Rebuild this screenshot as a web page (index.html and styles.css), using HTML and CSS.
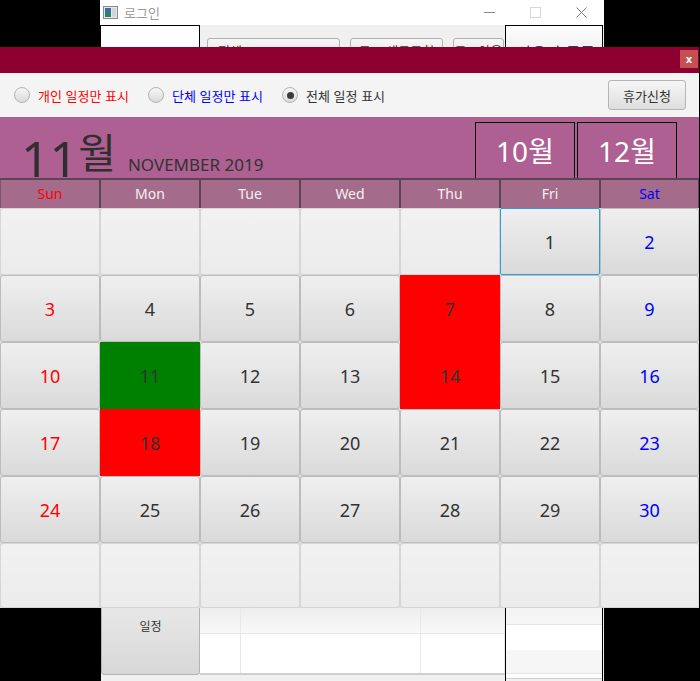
FILE: index.html
```html
<!DOCTYPE html>
<html lang="ko">
<head>
<meta charset="utf-8">
<title>일정</title>
<link rel="stylesheet" href="styles.css">
</head>
<body>
<div class="back">
  <div class="back-title">
    <svg class="app-icon" width="15" height="13" viewBox="0 0 15 13">
      <rect x="0.5" y="0.5" width="14" height="12" fill="#e8e8e8" stroke="#8a8a8a"/>
      <rect x="2" y="2" width="6" height="9" fill="#2f7f6a"/>
      <rect x="2" y="2" width="6" height="4" fill="#3b6fa8"/>
      <rect x="9" y="2" width="4" height="9" fill="#cfd6dc"/>
    </svg>
    <span class="back-title-text">로그인</span>
    <div class="win-controls">
      <span class="wc"><span class="wc-min"></span></span>
      <span class="wc"><span class="wc-max"></span></span>
      <span class="wc">
        <svg width="11" height="11" viewBox="0 0 11 11"><path d="M0.5 0.5L10.5 10.5M10.5 0.5L0.5 10.5" stroke="#7a7a7a" stroke-width="1"/></svg>
      </span>
    </div>
  </div>
  <div class="back-body">
    <div class="b-left">
      <div class="b-panel"></div>
      <div class="b-btn-schedule">일정</div>
      <div class="b-strip"></div>
    </div>
    <div class="b-mid">
      <div class="b-bar">
        <span class="b-combo">전체</span>
        <span class="b-button b-wide">로그 새로고침</span>
        <span class="b-button b-small">로그아웃</span>
      </div>
      <div class="b-table">
        <div class="b-trow b-shade"><span></span><span></span><span></span></div>
        <div class="b-trow b-white"><span></span><span></span><span></span></div>
      </div>
      <div class="b-strip"></div>
    </div>
    <div class="b-right">
      <div class="b-list-title">사용자 목록</div>
      <div class="b-list">
        <div class="b-li b-li-head"></div>
        <div class="b-li b-li-white"></div>
        <div class="b-li b-li-grey"></div>
        <div class="b-li b-li-end"></div>
      </div>
    </div>
  </div>
</div>

<div class="front">
  <div class="f-title"><span class="f-close">x</span></div>
  <div class="toolbar">
    <label class="radio-item"><span class="radio"></span><span class="rlabel red">개인 일정만 표시</span></label>
    <label class="radio-item"><span class="radio"></span><span class="rlabel blue">단체 일정만 표시</span></label>
    <label class="radio-item"><span class="radio checked"></span><span class="rlabel dark">전체 일정 표시</span></label>
    <span class="vac-btn">휴가신청</span>
  </div>
  <div class="month-head">
    <div class="month-title"><span class="m-num">11</span><span class="m-kor">월</span><span class="m-eng">NOVEMBER 2019</span></div>
    <div class="nav">
      <span class="nav-btn">10월</span>
      <span class="nav-btn">12월</span>
    </div>
  </div>
  <div class="week-head">
    <span class="wd sun">Sun</span><span class="wd">Mon</span><span class="wd">Tue</span><span class="wd">Wed</span><span class="wd">Thu</span><span class="wd">Fri</span><span class="wd sat">Sat</span>
  </div>
  <div class="days">
    <span class="day empty"></span><span class="day empty"></span><span class="day empty"></span><span class="day empty"></span><span class="day empty"></span><span class="day focus">1</span><span class="day sat">2</span>
    <span class="day sun">3</span><span class="day">4</span><span class="day">5</span><span class="day">6</span><span class="day ev-red">7</span><span class="day">8</span><span class="day sat">9</span>
    <span class="day sun">10</span><span class="day ev-green">11</span><span class="day">12</span><span class="day">13</span><span class="day ev-red">14</span><span class="day">15</span><span class="day sat">16</span>
    <span class="day sun">17</span><span class="day ev-red">18</span><span class="day">19</span><span class="day">20</span><span class="day">21</span><span class="day">22</span><span class="day sat">23</span>
    <span class="day sun">24</span><span class="day">25</span><span class="day">26</span><span class="day">27</span><span class="day">28</span><span class="day">29</span><span class="day sat">30</span>
    <span class="day empty"></span><span class="day empty"></span><span class="day empty"></span><span class="day empty"></span><span class="day empty"></span><span class="day empty"></span><span class="day empty"></span>
  </div>
</div>
</body>
</html>
```

FILE: styles.css
```css
* { box-sizing: border-box; }
html, body { margin: 0; padding: 0; }
body {
  width: 700px;
  height: 681px;
  background: #000;
  position: relative;
  overflow: hidden;
  font-family: "Noto Sans", "Noto Sans CJK KR", sans-serif;
  color: #333;
}

/* ---------- back window ---------- */
.back {
  position: absolute;
  left: 100px;
  top: 0;
  width: 504px;
  height: 681px;
  background: #f0f0f0;
  display: flex;
  flex-direction: column;
}
.back-title {
  height: 25px;
  background: #fff;
  display: flex;
  align-items: center;
  padding-left: 3px;
}
.app-icon { display: block; }
.back-title-text {
  margin-left: 6px;
  font-family: "Noto Sans CJK KR", sans-serif;
  font-size: 13px;
  color: #9a9a9a;
}
.win-controls { margin-left: auto; display: flex; height: 25px; }
.wc {
  width: 46px;
  height: 25px;
  display: flex;
  align-items: center;
  justify-content: center;
}
.wc-min { width: 11px; height: 1px; background: #8a8a8a; }
.wc-max { width: 11px; height: 11px; border: 1px solid #d6d6d6; }

.back-body { flex: 1; display: flex; }
.b-left { width: 100px; display: flex; flex-direction: column; border-left: 1px solid #000; }
.b-panel {
  height: 550px;
  background: linear-gradient(#fff, #f4f4f4);
  border-top: 1px solid #000;
  border-right: 1px solid #000;
}
.b-btn-schedule {
  height: 100px;
  background: linear-gradient(#f0f0f0, #d7d7d7);
  border: 1px solid #b3b3b3;
  border-radius: 3px;
  font-family: "Noto Sans CJK KR", sans-serif;
  font-size: 12px;
  display: flex;
  align-items: center;
  justify-content: center;
}
.b-strip { flex: 1; background: #f0f0f0; }

.b-mid { width: 305px; display: flex; flex-direction: column; }
.b-bar {
  height: 550px;
  display: flex;
  align-items: flex-start;
  gap: 10px;
  padding: 13px 0 0 7px;
}
.b-combo, .b-button {
  height: 25px;
  border: 1px solid #b0b0b0;
  border-radius: 3px;
  background: linear-gradient(#f7f7f7, #dedede);
  font-family: "Noto Sans CJK KR", sans-serif;
  font-size: 13px;
  display: flex;
  align-items: center;
}
.b-combo { width: 133px; padding-left: 10px; }
.b-wide { width: 93px; justify-content: center; }
.b-small { width: 51px; justify-content: center; }
.b-table {
  height: 100px;
  display: flex;
  flex-direction: column;
  justify-content: flex-end;
  background: #fff;
  border-bottom: 2px solid #cfcfcf;
}
.b-trow { display: grid; grid-template-columns: 41px 180px 84px; }
.b-trow span { border-right: 1px solid #e8e8e8; }
.b-shade { height: 28px; background: linear-gradient(#ececec, #f9f9f9); border-bottom: 1px solid #e6e6e6; }
.b-white { height: 39px; background: #fff; }

.b-right {
  width: 98px;
  border: 1px solid #000;
  border-bottom: none;
  display: flex;
  flex-direction: column;
  background: linear-gradient(#fdfdfd, #e8e8e8 40px, #f0f0f0);
}
.b-list-title {
  height: 550px;
  padding: 14px 0 0 11px;
  font-family: "Noto Sans CJK KR", sans-serif;
  font-size: 16px;
  color: #2e3d5c;
}
.b-list { display: flex; flex-direction: column; background: #fff; }
.b-li-head { height: 49px; background: linear-gradient(#f0f0f0, #f6f6f6); border-bottom: 1px solid #e4e4e4; }
.b-li-white { height: 25px; background: #fff; }
.b-li-grey { height: 24px; background: #f6f6f6; border-bottom: 1px solid #e4e4e4; }
.b-li-end { height: 5px; background: #fff; border-bottom: 1px solid #d0d0d0; }

/* ---------- front window ---------- */
.front {
  position: absolute;
  left: 0;
  top: 47px;
  width: 699px;
  height: 561px;
  display: flex;
  flex-direction: column;
  background: #f4f4f4;
}
.f-title {
  height: 26px;
  background: #8e0030;
  display: flex;
  justify-content: flex-end;
  padding: 3px 1px 0 0;
}
.f-close {
  width: 18px;
  height: 18px;
  background: #c4504f;
  color: #fff;
  font-family: "DejaVu Sans", sans-serif;
  font-weight: bold;
  font-size: 10px;
  display: flex;
  align-items: center;
  justify-content: center;
}

.toolbar {
  height: 44px;
  display: flex;
  align-items: center;
  padding: 0 13px 0 14px;
}
.radio-item { display: flex; align-items: center; margin-right: 19px; }
.radio {
  width: 16px;
  height: 16px;
  border-radius: 50%;
  border: 1px solid #b4b4b4;
  background: linear-gradient(#f6f6f6, #dadada);
  display: flex;
  align-items: center;
  justify-content: center;
}
.radio.checked::after {
  content: "";
  width: 7px;
  height: 7px;
  border-radius: 50%;
  background: #3a3a3a;
}
.rlabel {
  margin-left: 8px;
  font-family: "Noto Sans CJK KR", sans-serif;
  font-size: 13px;
}
.red { color: #ff0000; }
.blue { color: #0000ff; }
.dark { color: #333; }
.vac-btn {
  margin-left: auto;
  width: 78px;
  height: 30px;
  border: 1px solid #b4b4b4;
  border-radius: 3px;
  background: linear-gradient(#f6f6f6, #dedede);
  font-family: "Noto Sans CJK KR", sans-serif;
  font-size: 13px;
  display: flex;
  align-items: center;
  justify-content: center;
  color: #333;
}

.month-head {
  height: 61px;
  background: #ad6091;
  display: flex;
  justify-content: space-between;
}
.month-title {
  padding: 13px 0 0 21px;
  font-size: 50px;
  line-height: 40px;
  white-space: nowrap;
  color: #2f2f2f;
}
.m-num { font-family: "Noto Sans", sans-serif; font-size: 50px; line-height: 40px; }
.m-kor {
  font-family: "Noto Sans CJK KR", sans-serif;
  font-size: 41px;
  line-height: 40px;
  vertical-align: 9px;
}
.m-eng {
  font-family: "Noto Sans", sans-serif;
  font-size: 17px;
  line-height: 17px;
  vertical-align: 6px;
  margin-left: 12px;
  color: #333;
}
.nav { display: flex; gap: 2px; padding: 5px 22px 0 0; }
.nav-btn {
  width: 100px;
  height: 57px;
  border: 1px solid #000;
  border-bottom: none;
  color: #fff;
  font-family: "Noto Sans", "Noto Sans CJK KR", sans-serif;
  font-size: 28px;
  display: flex;
  align-items: center;
  justify-content: center;
  padding-bottom: 2px;
}

.week-head {
  height: 30px;
  display: grid;
  grid-template-columns: repeat(6, 100px) 99px;
  background: #a56b8b;
  border-top: 2px solid #5b4453;
}
.wd {
  border-left: 1px solid #5b4453;
  border-right: 1px solid #5b4453;
  color: #f2f2f2;
  font-size: 14px;
  display: flex;
  align-items: center;
  justify-content: center;
  padding-bottom: 2px;
}
.wd:first-child { border-left-color: #7d5468; }
.wd.sun { color: #ff0000; }
.wd.sat { color: #0000ff; }

.days {
  height: 400px;
  display: grid;
  grid-template-columns: repeat(6, 100px) 99px;
  grid-template-rows: repeat(5, 67px) 65px;
  background: #dcdcdc;
}
.day {
  border: 1px solid #bcbcbc;
  border-radius: 3px;
  background: linear-gradient(#efefef, #dadada);
  font-family: "Noto Sans", sans-serif;
  font-size: 18px;
  color: #333;
  display: flex;
  align-items: center;
  justify-content: center;
}
.day.sun { color: #ff0000; }
.day.sat { color: #0000ff; }
.day.empty {
  background: linear-gradient(#f2f2f2, #ebebeb);
  border-color: #d6d6d6;
}
.day.focus { border-color: #29a0d8; border-radius: 2px; }
.day.ev-red { background: #ff0000; border: none; border-radius: 0; }
.day.ev-green { background: #008000; border: none; border-radius: 0; }
```
